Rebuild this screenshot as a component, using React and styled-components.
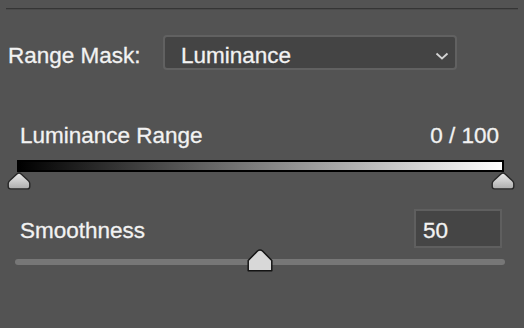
import React from "react";
import styled, { createGlobalStyle } from "styled-components";

const Global = createGlobalStyle`
  html, body { margin: 0; padding: 0; background: #535353; }
  body { width: 524px; height: 328px; overflow: hidden; }
  * { box-sizing: border-box; }
`;

const Panel = styled.div`
  width: 524px;
  height: 328px;
  background: #535353;
  font-family: "Liberation Sans", Arial, sans-serif;
  font-size: 22.5px;
  line-height: 26px;
  color: #f2f2f2;
  -webkit-text-stroke: 0.3px #f2f2f2;
  display: flex;
  flex-direction: column;
`;

const Divider = styled.div`
  height: 2px;
  margin: 8px 6px 0 6px;
  background: #353535;
  border-bottom: 1px solid #4a4a4a;
`;

const MaskRow = styled.div`
  display: flex;
  align-items: flex-start;
  margin-top: 25px;
  padding-left: 8px;
`;

const Label = styled.span`
  margin-top: ${(p) => p.$offset || 0}px;
  white-space: nowrap;
`;

const Select = styled.div`
  margin-left: auto;
  margin-right: 67px;
  width: 294px;
  height: 35px;
  background: #444444;
  border: 2px solid #616161;
  border-radius: 4px;
  padding: 6px 0 0 16px;
  display: flex;
  align-items: flex-start;
`;

const Chevron = styled.svg`
  margin-left: auto;
  margin-right: 6px;
  margin-top: 9px;
  width: 14px;
  height: 8px;
`;

const RangeHeader = styled.div`
  display: flex;
  justify-content: space-between;
  margin-top: 53px;
  padding: 0 25px 0 20px;
`;

const BarWrap = styled.div`
  position: relative;
  margin: 11px 20px 0 17px;
  height: 12px;
`;

const GradientBar = styled.div`
  height: 12px;
  border: 2px solid #000;
  background: linear-gradient(to right, #000 0%, #808080 50%, #fff 100%);
`;

const RangeThumb = styled.svg`
  position: absolute;
  top: 12px;
  width: 24px;
  height: 18px;
  ${(p) => (p.$side === "left" ? "left: -10px;" : "right: -11px;")}
`;

const SmoothRow = styled.div`
  display: flex;
  align-items: flex-start;
  justify-content: space-between;
  margin-top: 37px;
  padding: 0 22px 0 20px;
`;

const NumberBox = styled.div`
  width: 88px;
  height: 39px;
  background: #454545;
  border: 2px solid #5f5f5f;
  padding: 7px 0 0 7px;
`;

const Track = styled.div`
  position: relative;
  margin: 11px 19px 0 15px;
  height: 6px;
  border-radius: 3px;
  background: #777777;
`;

const SliderThumb = styled.svg`
  position: absolute;
  top: -10px;
  width: 26px;
  height: 23px;
`;

function RangeHandle({ side }) {
  const id = `g-${side}`;
  return (
    <RangeThumb $side={side} viewBox="0 0 24 18">
      <defs>
        <linearGradient id={id} x1="0" y1="0" x2="0" y2="1">
          <stop offset="0" stopColor="#ececec" />
          <stop offset="1" stopColor="#acacac" />
        </linearGradient>
      </defs>
      <path
        d="M12 1 Q13.1 1 14.1 2 L20.6 8 Q22.8 9.6 22.8 11.5 V14.5 Q22.8 16.9 20.4 16.9 H3.6 Q1.2 16.9 1.2 14.5 V11.5 Q1.2 9.6 3.4 8 L9.9 2 Q10.9 1 12 1 Z"
        fill={`url(#${id})`}
        stroke="#262626"
        strokeWidth="1.4"
      />
    </RangeThumb>
  );
}

export default function App() {
  const smooth = 50;
  return (
    <>
      <Global />
      <Panel>
        <Divider />
        <MaskRow>
          <Label $offset={8}>Range Mask:</Label>
          <Select>
            <span>Luminance</span>
            <Chevron viewBox="0 0 14 8">
              <path d="M1.5 1.5 L7 6.5 L12.5 1.5" fill="none" stroke="#d4d4d4" strokeWidth="1.8" />
            </Chevron>
          </Select>
        </MaskRow>
        <RangeHeader>
          <span>Luminance Range</span>
          <span>0 / 100</span>
        </RangeHeader>
        <BarWrap>
          <GradientBar />
          <RangeHandle side="left" />
          <RangeHandle side="right" />
        </BarWrap>
        <SmoothRow>
          <Label $offset={9}>Smoothness</Label>
          <NumberBox>{smooth}</NumberBox>
        </SmoothRow>
        <Track>
          <SliderThumb viewBox="0 0 26 23" style={{ left: `calc(${smooth}% - 13px)` }}>
            <path
              d="M1.2 11.5 L10.5 2 Q13 0.2 15.5 2 L24.8 11.5 V21.8 H1.2 Z"
              fill="#d8d8d8"
              stroke="#141414"
              strokeWidth="1.5"
              strokeLinejoin="round"
            />
          </SliderThumb>
        </Track>
      </Panel>
    </>
  );
}
